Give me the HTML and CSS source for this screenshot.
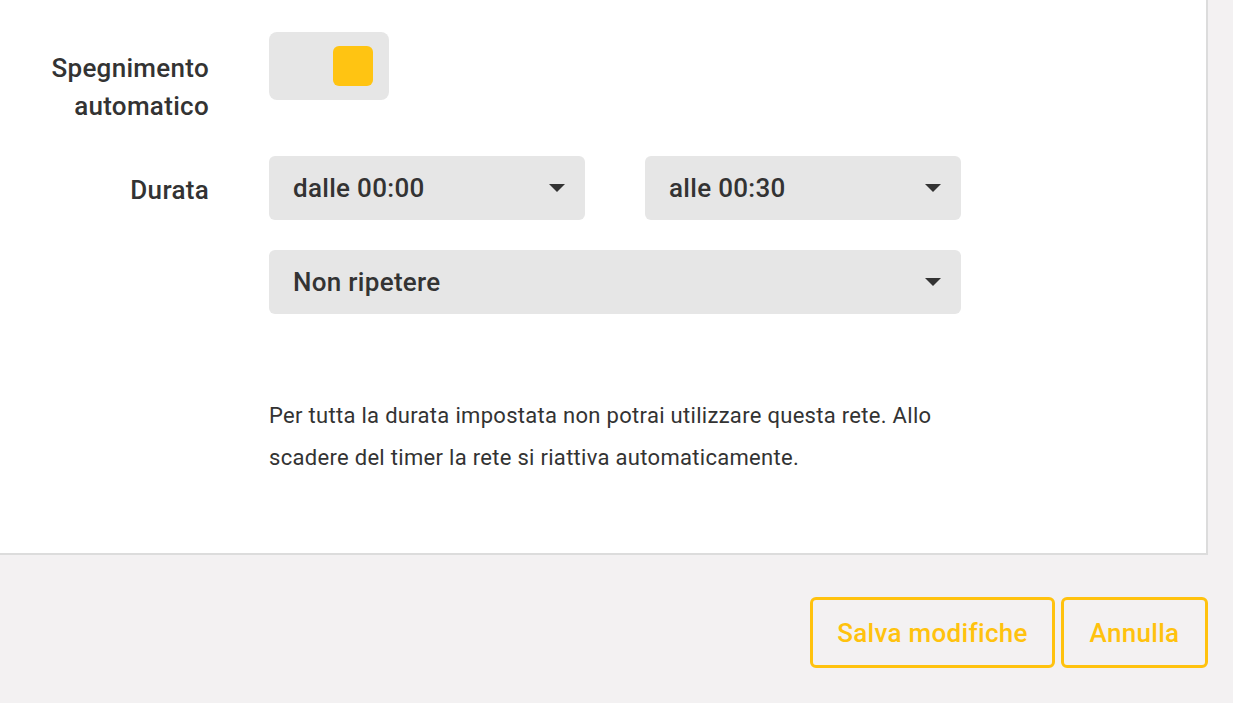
FILE: index.html
```html
<!DOCTYPE html>
<html lang="it">
<head>
<meta charset="utf-8">
<link rel="stylesheet" href="styles.css">
</head>
<body>
<div class="page">
  <section class="card">
    <div class="row row-toggle">
      <div class="label">Spegnimento<br>automatico</div>
      <div class="field">
        <div class="toggle"><span class="knob"></span></div>
      </div>
    </div>
    <div class="row row-durata">
      <div class="label label-durata">Durata</div>
      <div class="field">
        <div class="selects">
          <div class="select"><span>dalle 00:00</span><span class="caret"></span></div>
          <div class="select"><span>alle 00:30</span><span class="caret"></span></div>
        </div>
        <div class="select select-wide"><span>Non ripetere</span><span class="caret"></span></div>
        <p class="note">Per tutta la durata impostata non potrai utilizzare questa rete. Allo<br>scadere del timer la rete si riattiva automaticamente.</p>
      </div>
    </div>
  </section>
  <div class="actions">
    <button class="btn btn-save">Salva modifiche</button>
    <button class="btn btn-cancel">Annulla</button>
  </div>
</div>
</body>
</html>
```
FILE: styles.css
```css
* { box-sizing: border-box; }
html, body { margin: 0; padding: 0; }
body {
  background: #f3f1f2;
  font-family: Roboto, "Noto Sans", sans-serif;
  color: #333333;
  width: 1233px;
  height: 703px;
  overflow: hidden;
}
.page { width: 1233px; }
.card {
  width: 1208px;
  height: 555px;
  background: #ffffff;
  border-right: 2px solid #dcdcdc;
  border-bottom: 2px solid #dcdcdc;
  padding-top: 32px;
}
.row { display: flex; }
.label {
  width: 209px;
  flex: none;
  text-align: right;
  font-size: 26px;
  font-weight: 500;
  line-height: 38px;
  letter-spacing: 0.3px;
  color: #333;
  white-space: nowrap;
}
.row-toggle .label { margin-top: 17px; }
.field { margin-left: 60px; }
.toggle {
  width: 120px;
  height: 68px;
  background: #e6e6e6;
  border-radius: 8px;
  display: flex;
  align-items: center;
  justify-content: flex-end;
  padding-right: 16px;
}
.knob {
  width: 40px;
  height: 40px;
  background: #ffc412;
  border-radius: 6px;
}
.row-durata { margin-top: 31px; }
.label-durata { line-height: 68px; }
.selects { display: flex; gap: 60px; }
.select {
  width: 316px;
  height: 64px;
  background: #e6e6e6;
  border-radius: 6px;
  display: flex;
  align-items: center;
  justify-content: space-between;
  padding: 0 20px 0 24px;
  font-size: 26px;
  font-weight: 500;
  letter-spacing: 0.3px;
  color: #333;
}
.select-wide { width: 692px; margin-top: 30px; }
.caret {
  width: 0; height: 0;
  border-left: 8px solid transparent;
  border-right: 8px solid transparent;
  border-top: 8px solid #333;
}
.note {
  margin: 81px 0 0 0;
  font-size: 22px;
  line-height: 42px;
  color: #333;
  letter-spacing: 0.3px;
  white-space: nowrap;
}
.actions {
  display: flex;
  justify-content: flex-end;
  gap: 6px;
  width: 1208px;
  margin-top: 42px;
}
.btn {
  height: 71px;
  border: 3px solid #ffc20e;
  border-radius: 6px;
  background: transparent;
  color: #ffc20e;
  font-family: Roboto, "Noto Sans", sans-serif;
  font-size: 26px;
  font-weight: 500;
  letter-spacing: 0.3px;
  padding: 0;
}
.btn-save { width: 245px; }
.btn-cancel { width: 147px; }
```
